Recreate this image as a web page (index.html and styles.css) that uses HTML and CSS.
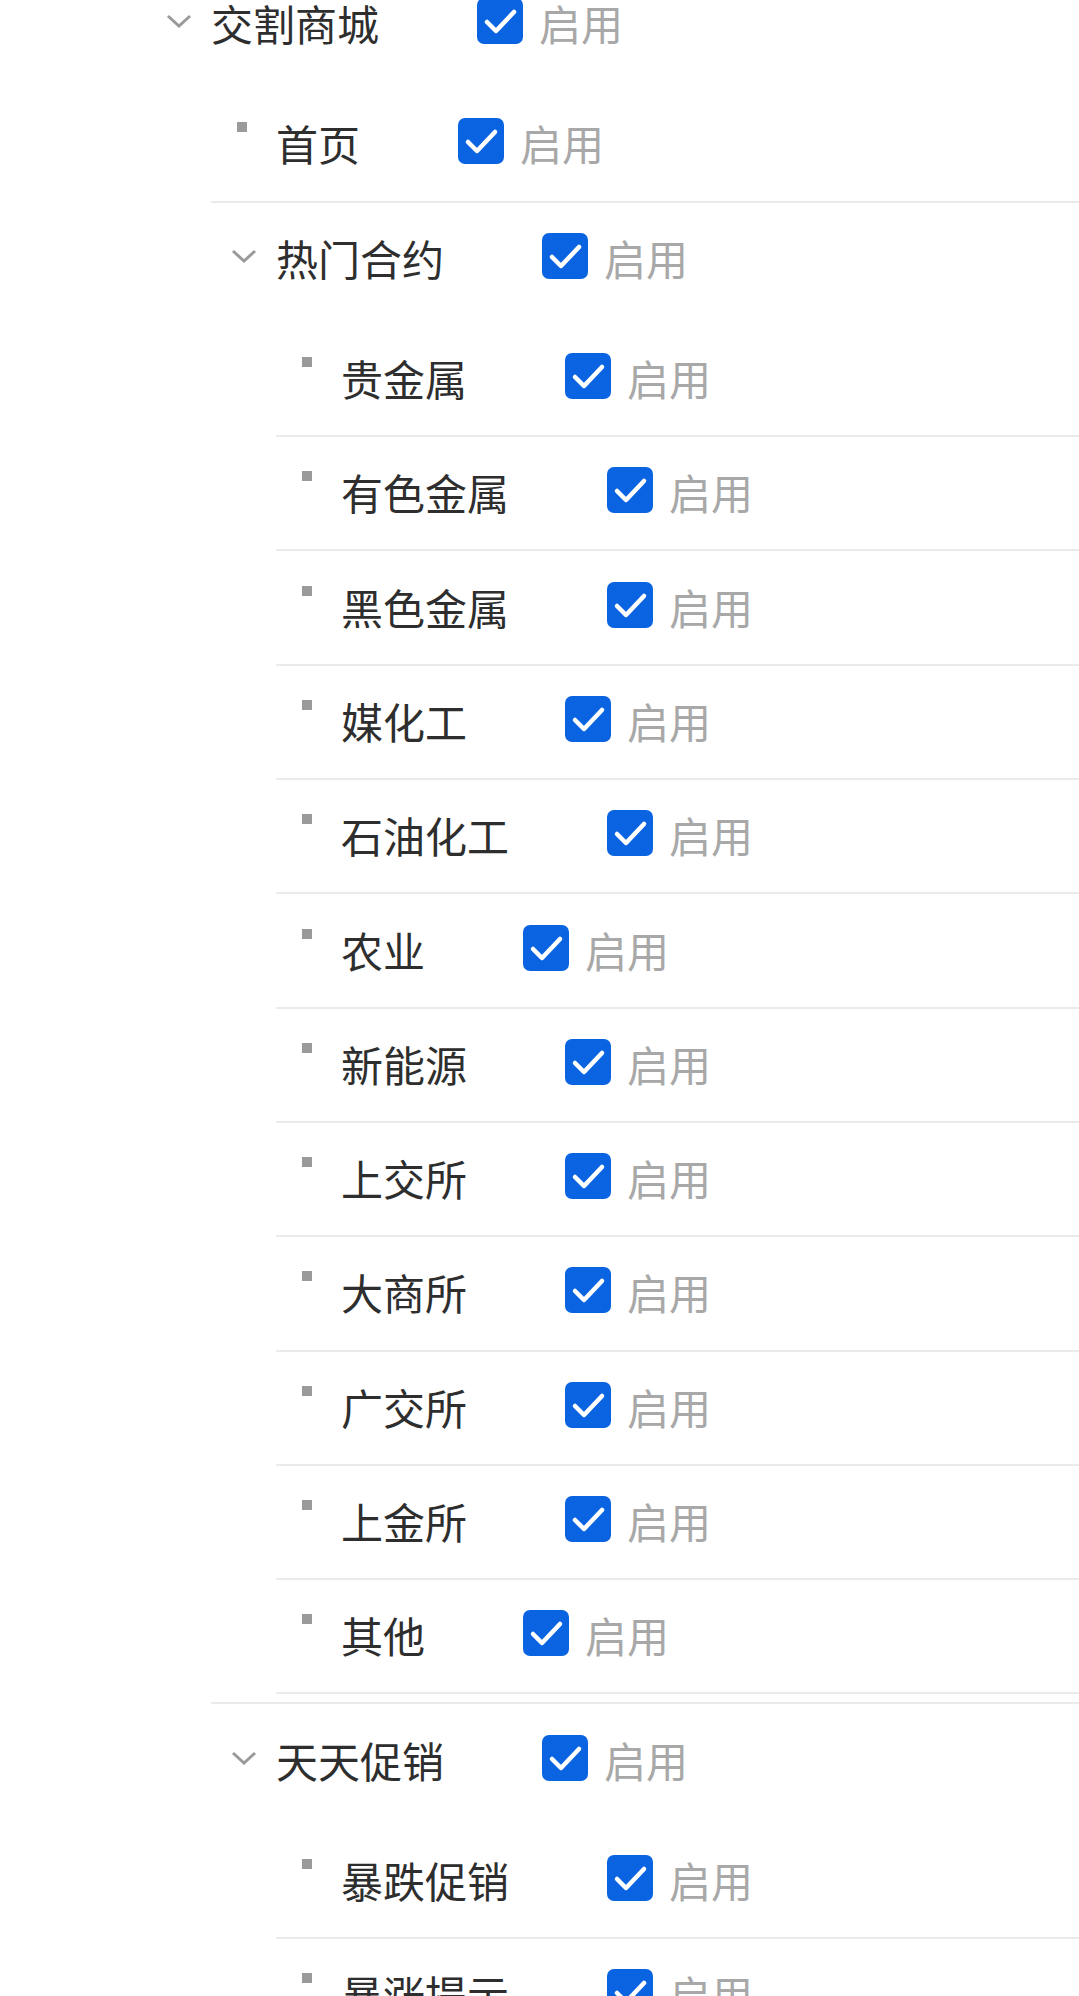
FILE: index.html
```html
<!DOCTYPE html>
<html lang="zh-CN">

<head>
    <meta charset="UTF-8">
    <meta name="viewport" content="width=device-width, initial-scale=1.0">
    <title>菜单配置</title>
    <link rel="stylesheet" href="styles.css">
</head>

<body>
    <div class="tree">
        <div class="node">
            <div class="row">
                <span class="icon"><svg class="arrow" viewBox="0 0 26 14"><path d="M2 2 L13 12 L24 2" /></svg></span>
                <span class="label">交割商城</span>
                <label class="check"><span class="box"><svg viewBox="0 0 46 46"><path d="M10 24 L19 33 L37 14" /></svg></span><span class="check-text">启用</span></label>
            </div>
            <div class="children">
                <div class="node leaf">
                    <div class="row">
                        <span class="icon"><span class="dot"></span></span>
                        <span class="label">首页</span>
                        <label class="check"><span class="box"><svg viewBox="0 0 46 46"><path d="M10 24 L19 33 L37 14" /></svg></span><span class="check-text">启用</span></label>
                    </div>
                </div>
                <div class="node" id="hot"></div>
                <div class="node" id="promo"></div>
            </div>
        </div>
    </div>
    <script>
        const chevron = '<svg class="arrow" viewBox="0 0 26 14"><path d="M2 2 L13 12 L24 2" /></svg>';
        const tick = '<span class="box"><svg viewBox="0 0 46 46"><path d="M10 24 L19 33 L37 14" /></svg></span>';

        function row(text, hasKids) {
            const icon = hasKids ? chevron : '<span class="dot"></span>';
            return '<div class="row"><span class="icon">' + icon + '</span>' +
                '<span class="label">' + text + '</span>' +
                '<label class="check">' + tick + '<span class="check-text">启用</span></label></div>';
        }

        function fill(id, title, kids) {
            let html = row(title, true) + '<div class="children">';
            for (const k of kids) {
                html += '<div class="node leaf">' + row(k, false) + '</div>';
            }
            html += '</div>';
            document.getElementById(id).innerHTML = html;
        }

        fill("hot", "热门合约", ["贵金属", "有色金属", "黑色金属", "媒化工", "石油化工", "农业",
            "新能源", "上交所", "大商所", "广交所", "上金所", "其他"]);
        fill("promo", "天天促销", ["暴跌促销", "暴涨提示"]);
    </script>
</body>

</html>
```

FILE: styles.css
```css
html,
body {
    margin: 0;
    height: 100vh;
    overflow: hidden;
    background: #fff;
}

body {
    font-family: "Noto Sans CJK SC", "Noto Sans", sans-serif;
    color: #333;
}

.tree {
    margin-top: -32px;
    padding-left: 146px;
}

.node {
    border-bottom: 2px solid #ebebeb;
}

.row {
    display: flex;
    align-items: center;
    height: 112.3px;
}

.icon {
    width: 65px;
    flex-shrink: 0;
    display: flex;
    justify-content: center;
    align-items: center;
}

.arrow {
    width: 26px;
    height: 14px;
    margin-bottom: 6px;
}

.arrow path {
    fill: none;
    stroke: #9a9a9a;
    stroke-width: 3;
}

.dot {
    width: 10px;
    height: 10px;
    background: #9a9a9a;
    margin-bottom: 34px;
    margin-right: 3px;
}

.label {
    font-size: 42px;
    color: #2e2e2e;
    margin-right: 98px;
    margin-bottom: 3px;
    white-space: nowrap;
}

.check {
    display: flex;
    align-items: center;
}

.box {
    width: 46px;
    height: 46px;
    border-radius: 7px;
    background: #0a64e1;
    display: flex;
    margin-bottom: 6px;
}

.box svg {
    width: 46px;
    height: 46px;
}

.box path {
    fill: none;
    stroke: #fff;
    stroke-width: 4.5;
    stroke-linecap: round;
    stroke-linejoin: round;
}

.check-text {
    font-size: 42px;
    color: #a8a8a8;
    margin-left: 16px;
    margin-bottom: 3px;
}

.children {
    padding: 8px 0 8px 65px;
}
```
